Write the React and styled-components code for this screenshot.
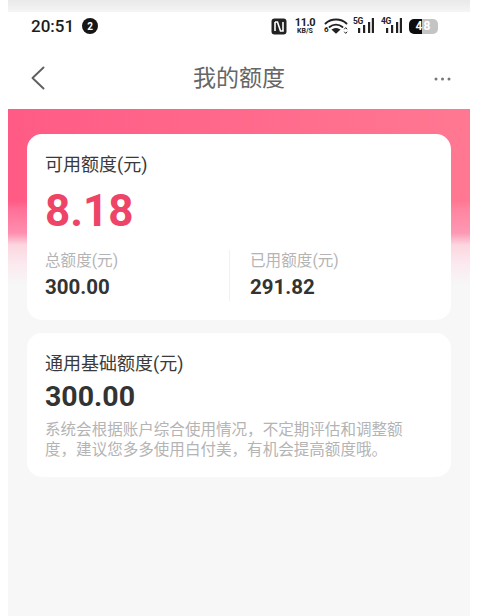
import React from "react";
import styled, { createGlobalStyle } from "styled-components";

const GlobalStyle = createGlobalStyle`
  html, body {
    margin: 0;
    padding: 0;
    background: #fff;
    overflow: hidden;
  }
  * {
    box-sizing: border-box;
  }
`;

const FONT = `Roboto, "Noto Sans CJK SC", sans-serif`;

const Screen = styled.div`
  width: 462px;
  height: 616px;
  margin-left: 8px;
  display: flex;
  flex-direction: column;
  background: #f7f7f7;
  font-family: ${FONT};
  overflow: hidden;
`;

const TopShade = styled.div`
  height: 12px;
  background: linear-gradient(#e9e9e9, #f5f5f5);
`;

const StatusBar = styled.div`
  height: 28px;
  display: flex;
  align-items: center;
  justify-content: space-between;
  padding: 0 32px 0 23px;
  background: #fff;
`;

const StatusLeft = styled.div`
  display: flex;
  align-items: center;
  gap: 8px;
`;

const Clock = styled.span`
  font-size: 17px;
  font-weight: 500;
  color: #1c1c1c;
`;

const NotifyBadge = styled.span`
  width: 16px;
  height: 16px;
  border-radius: 50%;
  background: #161616;
  color: #fff;
  font-size: 10px;
  font-weight: 700;
  display: flex;
  align-items: center;
  justify-content: center;
`;

const StatusRight = styled.div`
  display: flex;
  align-items: center;
`;

const Speed = styled.div`
  width: 20px;
  display: flex;
  flex-direction: column;
  align-items: center;
  margin: 0 9px 0 8px;
  color: #222;
  font-weight: 700;
`;

const SpeedValue = styled.span`
  font-size: 11px;
  line-height: 11px;
  letter-spacing: -0.4px;
`;

const SpeedUnit = styled.span`
  font-size: 7px;
  line-height: 7px;
  white-space: nowrap;
`;

const WifiWrap = styled.div`
  position: relative;
  width: 24px;
  height: 18px;
  margin-right: 5px;
`;

const WifiSix = styled.span`
  position: absolute;
  left: 0;
  bottom: 1px;
  font-size: 8px;
  line-height: 8px;
  font-weight: 700;
  color: #222;
`;

const SignalWrap = styled.div`
  position: relative;
  width: 21px;
  height: 18px;
  margin-right: 7px;
`;

const SignalTag = styled.span`
  position: absolute;
  left: 0;
  top: 0;
  font-size: 8.5px;
  line-height: 9px;
  font-weight: 700;
  letter-spacing: -0.3px;
  color: #222;
`;

const Battery = styled.div`
  width: 29px;
  height: 15px;
  border-radius: 5px;
  overflow: hidden;
  background: linear-gradient(90deg, #0c0c0c 0 45%, #c4c4c4 45% 100%);
  color: #fff;
  font-size: 12px;
  font-weight: 700;
  display: flex;
  align-items: center;
  justify-content: center;
  letter-spacing: 1px;
`;

const NavBar = styled.div`
  height: 69px;
  background: #fff;
  display: flex;
  align-items: center;
  justify-content: space-between;
  padding: 9px 19px 0 22px;
`;

const NavTitle = styled.h1`
  margin: 0;
  font-size: 23px;
  line-height: 30px;
  font-weight: 400;
  color: #666;
`;

const NavSide = styled.div`
  width: ${(p) => (p.$end ? 20 : 17)}px;
  display: flex;
  justify-content: ${(p) => (p.$end ? "flex-end" : "flex-start")};
  margin-top: ${(p) => (p.$end ? 0 : -3)}px;
`;

const Content = styled.div`
  flex: 1;
  display: flex;
  flex-direction: column;
  gap: 13px;
  padding: 25px 19px 0;
  background:
    linear-gradient(
      180deg,
      rgba(255, 170, 205, 0) 92px,
      rgba(255, 170, 205, 0.25) 100px,
      rgba(252, 170, 198, 0.65) 124px,
      #fcd6e0 136px,
      #fbeaef 156px,
      #f7f7f7 176px
    ) 0 0 / 100% 176px no-repeat,
    linear-gradient(90deg, #ff5b85, #ff7892) 0 0 / 100% 176px no-repeat;
`;

const Card = styled.section`
  background: #fff;
  border-radius: 15px;
  padding: ${(p) => p.$pad};
`;

const CardLabel = styled.div`
  font-size: 18px;
  line-height: 24px;
  color: #3a3a3a;
`;

const BigAmount = styled.div`
  margin-top: 8px;
  font-size: 44px;
  line-height: 52px;
  font-weight: 700;
  color: #ee4468;
`;

const StatsRow = styled.div`
  display: flex;
  margin-top: 13px;
`;

const Stat = styled.div`
  flex: ${(p) => (p.$first ? "0 0 184px" : "1")};
  padding-left: ${(p) => (p.$first ? 0 : 20)}px;
  border-left: ${(p) => (p.$first ? "none" : "1px solid #f1f1f1")};
`;

const StatLabel = styled.div`
  font-size: 15.6px;
  line-height: 22px;
  color: #b4b4b4;
`;

const StatValue = styled.div`
  margin-top: 1px;
  font-size: 20.5px;
  line-height: 28px;
  font-weight: 700;
  color: #333;
`;

const BaseAmount = styled.div`
  margin-top: 2px;
  font-size: 28.5px;
  line-height: 38px;
  font-weight: 700;
  color: #333;
`;

const Note = styled.p`
  margin: 3.5px 0 0;
  width: 362px;
  font-size: 15.55px;
  line-height: 20.5px;
  color: #b4b4b4;
`;

function NfcIcon() {
  return (
    <svg width="16" height="17" viewBox="0 0 16 17">
      <rect x="0.5" y="0.5" width="15" height="16" rx="3" fill="#222" />
      <path d="M4 4v9M4 4h2.5l3 9H12V4" fill="none" stroke="#fff" strokeWidth="1.6" />
    </svg>
  );
}

function WifiIcon() {
  return (
    <svg width="24" height="18" viewBox="0 0 24 18" fill="none" stroke="#222" strokeWidth="1.9" strokeLinecap="round">
      <path d="M1.5 6.5C7 1.2 17 1.2 22.5 6.5" />
      <path d="M5.5 10c3.8-3.2 9.2-3.2 13 0" />
      <path d="M9 12.8c1.8-1 4.2-1 6 0L12 15.5z" fill="#222" />
      <path d="M20.5 12l1.2-1.4L22.9 12M20.5 15l1.2 1.4L22.9 15" strokeWidth="1" />
    </svg>
  );
}

function SignalBars() {
  return (
    <svg width="21" height="18" viewBox="0 0 21 18" fill="#222">
      <rect x="5" y="11" width="2.2" height="5" />
      <rect x="10" y="8" width="2.2" height="8" />
      <rect x="15" y="5" width="2.2" height="11" />
      <rect x="18.8" y="1" width="2.2" height="15" />
    </svg>
  );
}

function BackIcon() {
  return (
    <svg width="16" height="24" viewBox="0 0 16 24" fill="none" stroke="#5f5f5f" strokeWidth="1.9" strokeLinecap="round" strokeLinejoin="round">
      <path d="M13.5 1.5L2.5 12l11 10.5" />
    </svg>
  );
}

function MoreIcon() {
  return (
    <svg width="17" height="4" viewBox="0 0 17 4" fill="#777">
      <circle cx="2" cy="2" r="1.5" />
      <circle cx="8.5" cy="2" r="1.5" />
      <circle cx="15" cy="2" r="1.5" />
    </svg>
  );
}

export default function App() {
  return (
    <>
      <GlobalStyle />
      <Screen>
        <TopShade />
        <StatusBar>
          <StatusLeft>
            <Clock>20:51</Clock>
            <NotifyBadge>2</NotifyBadge>
          </StatusLeft>
          <StatusRight>
            <NfcIcon />
            <Speed>
              <SpeedValue>11.0</SpeedValue>
              <SpeedUnit>KB/S</SpeedUnit>
            </Speed>
            <WifiWrap>
              <WifiIcon />
              <WifiSix>6</WifiSix>
            </WifiWrap>
            <SignalWrap>
              <SignalBars />
              <SignalTag>5G</SignalTag>
            </SignalWrap>
            <SignalWrap>
              <SignalBars />
              <SignalTag>4G</SignalTag>
            </SignalWrap>
            <Battery>48</Battery>
          </StatusRight>
        </StatusBar>
        <NavBar>
          <NavSide>
            <BackIcon />
          </NavSide>
          <NavTitle>我的额度</NavTitle>
          <NavSide $end>
            <MoreIcon />
          </NavSide>
        </NavBar>
        <Content>
          <Card $pad="19px 18px 19px">
            <CardLabel>可用额度(元)</CardLabel>
            <BigAmount>8.18</BigAmount>
            <StatsRow>
              <Stat $first>
                <StatLabel>总额度(元)</StatLabel>
                <StatValue>300.00</StatValue>
              </Stat>
              <Stat>
                <StatLabel>已用额度(元)</StatLabel>
                <StatValue>291.82</StatValue>
              </Stat>
            </StatsRow>
          </Card>
          <Card $pad="19px 18px 16px">
            <CardLabel>通用基础额度(元)</CardLabel>
            <BaseAmount>300.00</BaseAmount>
            <Note>
              系统会根据账户综合使用情况，不定期评估和调整额度，建议您多多使用白付美，有机会提高额度哦。
            </Note>
          </Card>
        </Content>
      </Screen>
    </>
  );
}
